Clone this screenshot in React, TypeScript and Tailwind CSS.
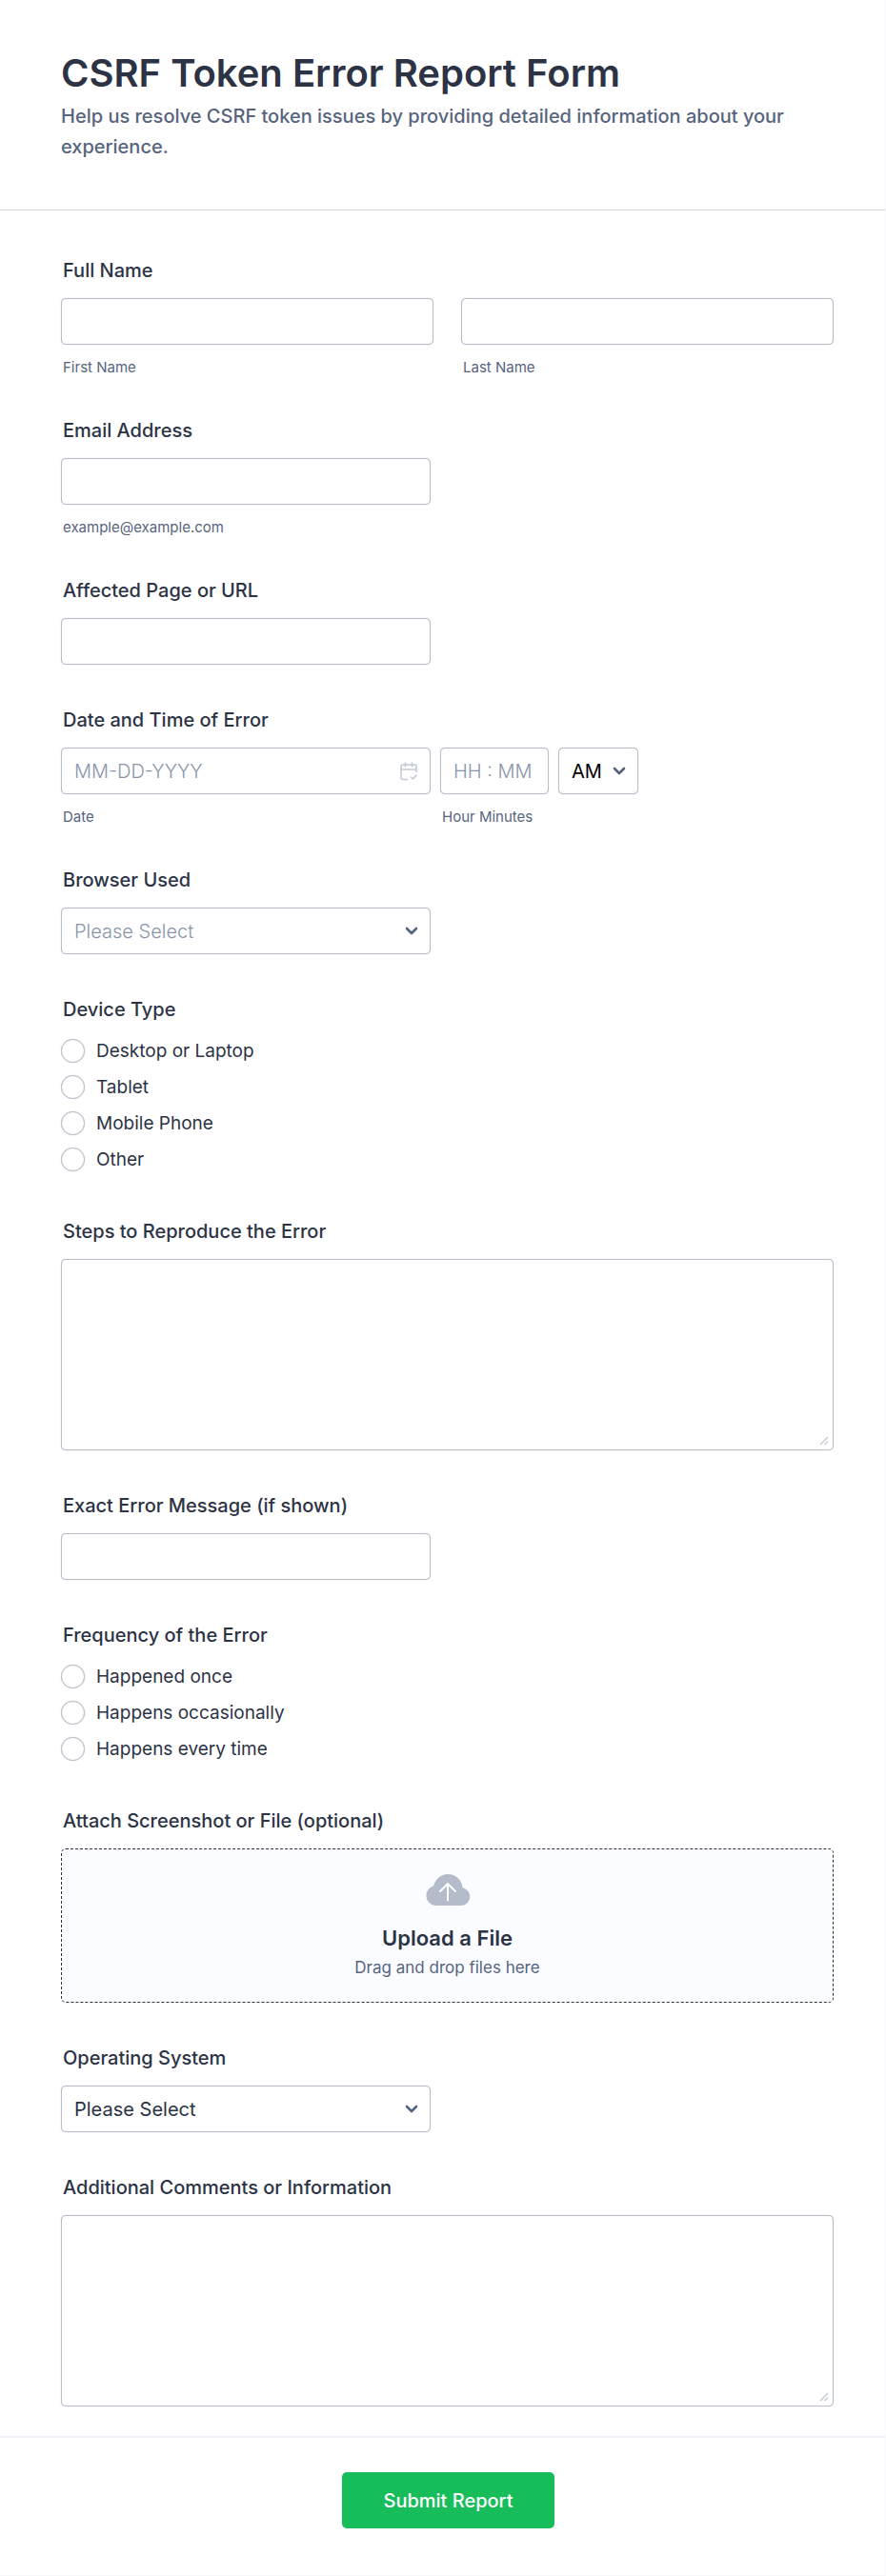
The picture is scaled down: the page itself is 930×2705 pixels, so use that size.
import { useState } from "react";
import type { ReactNode } from "react";

const control =
  "h-[49px] w-full rounded-[5px] border border-[#b8bdc9] bg-white px-[13px] text-[20px] text-[#2c3345] shadow-[0_0_1px_#b8bdc9] placeholder:font-light placeholder:text-[#8894ab] focus:outline-none focus:ring-2 focus:ring-blue-300";

const labelStyle = "block pl-0.5 text-[20px] leading-6 font-medium text-[#2c3345]";

const browsers = ["Chrome", "Firefox", "Safari", "Edge", "Other"];
const systems = ["Windows", "macOS", "Linux", "Android", "iOS"];
const devices = ["Desktop or Laptop", "Tablet", "Mobile Phone", "Other"];
const frequencies = ["Happened once", "Happens occasionally", "Happens every time"];

function Field({ id, label, children }: { id: string; label: string; children: ReactNode }) {
  return (
    <div>
      <label htmlFor={id} className={`${labelStyle} mb-[17px]`}>
        {label}
      </label>
      {children}
    </div>
  );
}

function SubLabel({ htmlFor, children }: { htmlFor: string; children: ReactNode }) {
  return (
    <label
      htmlFor={htmlFor}
      className="mt-4 block pl-0.5 text-[15px] leading-4 text-[#57647e]"
    >
      {children}
    </label>
  );
}

function TextArea({ id }: { id: string }) {
  return (
    <div className="relative">
      <textarea id={id} className={`${control} block h-[201px] resize-none py-2`} />
      <svg
        viewBox="0 0 10 10"
        className="pointer-events-none absolute right-[5px] bottom-[5px] size-[10px]"
        fill="none"
        stroke="#c3c8d6"
        strokeWidth="1.4"
      >
        <path d="M1 9l8-8M5.500 9L9 5.500" />
      </svg>
    </div>
  );
}

function Chevron() {
  return (
    <svg
      viewBox="0 0 14 10"
      className="pointer-events-none absolute top-5 right-[13px] h-[10px] w-[14px]"
      fill="none"
      stroke="#56617f"
      strokeWidth="2.6"
      strokeLinecap="round"
      strokeLinejoin="round"
    >
      <path d="M2 2l5 5 5-5" />
    </svg>
  );
}

function CalendarIcon() {
  return (
    <svg
      viewBox="0 0 18 20"
      className="pointer-events-none absolute top-[15px] right-[14px] h-5 w-[18px]"
      fill="none"
      stroke="#c3c8d6"
      strokeWidth="1.6"
      strokeLinecap="round"
      strokeLinejoin="round"
    >
      <path d="M7.500 18.500H3A2 2 0 0 1 1 16.500V5A2 2 0 0 1 3 3h12A2 2 0 0 1 17 5V10.500M1 8h16M5.500 1v4M12.500 1v4" />
      <path d="M11.500 16l2 2 3.500-4" />
    </svg>
  );
}

function RadioGroup({ name, label, options }: { name: string; label: string; options: string[] }) {
  return (
    <fieldset className="pb-[5px]">
      <legend className={`${labelStyle} mb-[19px]`}>{label}</legend>
      <div className="flex flex-col gap-[13px]">
        {options.map((option) => (
          <label
            key={option}
            className="flex items-center gap-3 text-[19px] leading-[25px] text-[#2c3345]"
          >
            <input
              type="radio"
              name={name}
              value={option}
              className="size-[25px] shrink-0 appearance-none rounded-full border border-[#b8bdc9] bg-white shadow-[0_0_1px_#b8bdc9] checked:border-[8px] checked:border-blue-600"
            />
            {option}
          </label>
        ))}
      </div>
    </fieldset>
  );
}

export default function App() {
  const [browser, setBrowser] = useState("");

  return (
    <form
      className="border-r border-b border-[#f7f7fc] bg-white font-['Inter',sans-serif]"
      onSubmit={(e) => e.preventDefault()}
    >
      <header className="border-b border-[#cfd4dd] px-16 pt-[52px] pb-[50px]">
        <h1 className="text-[40px] leading-[50px] font-semibold text-[#2c3345]">
          CSRF Token Error Report Form
        </h1>
        <p className="mt-1 text-[20px] leading-8 font-medium text-[#57647e]">
          Help us resolve CSRF token issues by providing detailed information about your
          experience.
        </p>
      </header>

      <div className="flex flex-col gap-[46px] pt-[51px] pr-[54px] pb-[31px] pl-16">
        <Field id="first-name" label="Full Name">
          <div className="grid grid-cols-2 gap-[29px]">
            <div>
              <input id="first-name" type="text" className={control} />
              <SubLabel htmlFor="first-name">First Name</SubLabel>
            </div>
            <div>
              <input id="last-name" type="text" className={control} />
              <SubLabel htmlFor="last-name">Last Name</SubLabel>
            </div>
          </div>
        </Field>

        <Field id="email" label="Email Address">
          <div className="max-w-[388px]">
            <input id="email" type="email" className={control} />
            <SubLabel htmlFor="email">example@example.com</SubLabel>
          </div>
        </Field>

        <Field id="page-url" label="Affected Page or URL">
          <div className="max-w-[388px]">
            <input id="page-url" type="text" className={control} />
          </div>
        </Field>

        <Field id="date" label="Date and Time of Error">
          <div className="flex gap-[10px]">
            <div className="w-[388px]">
              <div className="relative">
                <input id="date" type="text" placeholder="MM-DD-YYYY" className={control} />
                <CalendarIcon />
              </div>
              <SubLabel htmlFor="date">Date</SubLabel>
            </div>
            <div className="w-[114px]">
              <input id="time" type="text" placeholder="HH : MM" className={control} />
              <SubLabel htmlFor="time">Hour Minutes</SubLabel>
            </div>
            <div className="relative w-[84px]">
              <select aria-label="AM or PM" className={`${control} appearance-none text-black`}>
                <option>AM</option>
                <option>PM</option>
              </select>
              <Chevron />
            </div>
          </div>
        </Field>

        <Field id="browser" label="Browser Used">
          <div className="relative max-w-[388px]">
            <select
              id="browser"
              value={browser}
              onChange={(e) => setBrowser(e.target.value)}
              className={`${control} appearance-none ${browser ? "" : "font-light text-[#8894ab]"}`}
            >
              <option value="">Please Select</option>
              {browsers.map((name) => (
                <option key={name}>{name}</option>
              ))}
            </select>
            <Chevron />
          </div>
        </Field>

        <RadioGroup name="device" label="Device Type" options={devices} />

        <Field id="steps" label="Steps to Reproduce the Error">
          <TextArea id="steps" />
        </Field>

        <Field id="message" label="Exact Error Message (if shown)">
          <div className="max-w-[388px]">
            <input id="message" type="text" className={control} />
          </div>
        </Field>

        <RadioGroup name="frequency" label="Frequency of the Error" options={frequencies} />

        <Field id="attachment" label="Attach Screenshot or File (optional)">
          <label
            htmlFor="attachment"
            className="flex h-[162px] cursor-pointer flex-col items-center rounded-[5px] border border-dashed border-[#303339] bg-[#fafcff] pt-[26px]"
          >
            <svg viewBox="0 0 48 33" className="h-[33px] w-12">
              <path
                d="M10.500 33A10.500 10.500 0 0 1 9 12.500C11 5 17 0 24 0c8 0 15 6 15.500 14.200A9.500 9.500 0 0 1 38.500 33z"
                fill="#b4bccc"
              />
              <path
                d="M24 27.500V10.500M16 18l8-8 8 8"
                fill="none"
                stroke="#fff"
                strokeWidth="2"
                strokeLinecap="round"
                strokeLinejoin="round"
              />
            </svg>
            <span className="mt-5 text-[22px] leading-7 font-semibold text-[#2c3345]">
              Upload a File
            </span>
            <span className="mt-1 text-[17px] leading-[26px] text-[#57647e]">
              Drag and drop files here
            </span>
            <input id="attachment" type="file" className="sr-only" />
          </label>
        </Field>

        <Field id="os" label="Operating System">
          <div className="relative max-w-[388px]">
            <select id="os" className={`${control} appearance-none`}>
              <option value="">Please Select</option>
              {systems.map((name) => (
                <option key={name}>{name}</option>
              ))}
            </select>
            <Chevron />
          </div>
        </Field>

        <Field id="comments" label="Additional Comments or Information">
          <TextArea id="comments" />
        </Field>
      </div>

      <div className="flex justify-center border-t-2 border-[#f0f0f7] pt-9 pb-[49px] pl-3">
        <button
          type="submit"
          className="h-[59px] w-[223px] rounded-[5px] bg-[#18bd5b] text-[20px] font-medium text-white hover:bg-[#16aa52]"
        >
          Submit Report
        </button>
      </div>
    </form>
  );
}
